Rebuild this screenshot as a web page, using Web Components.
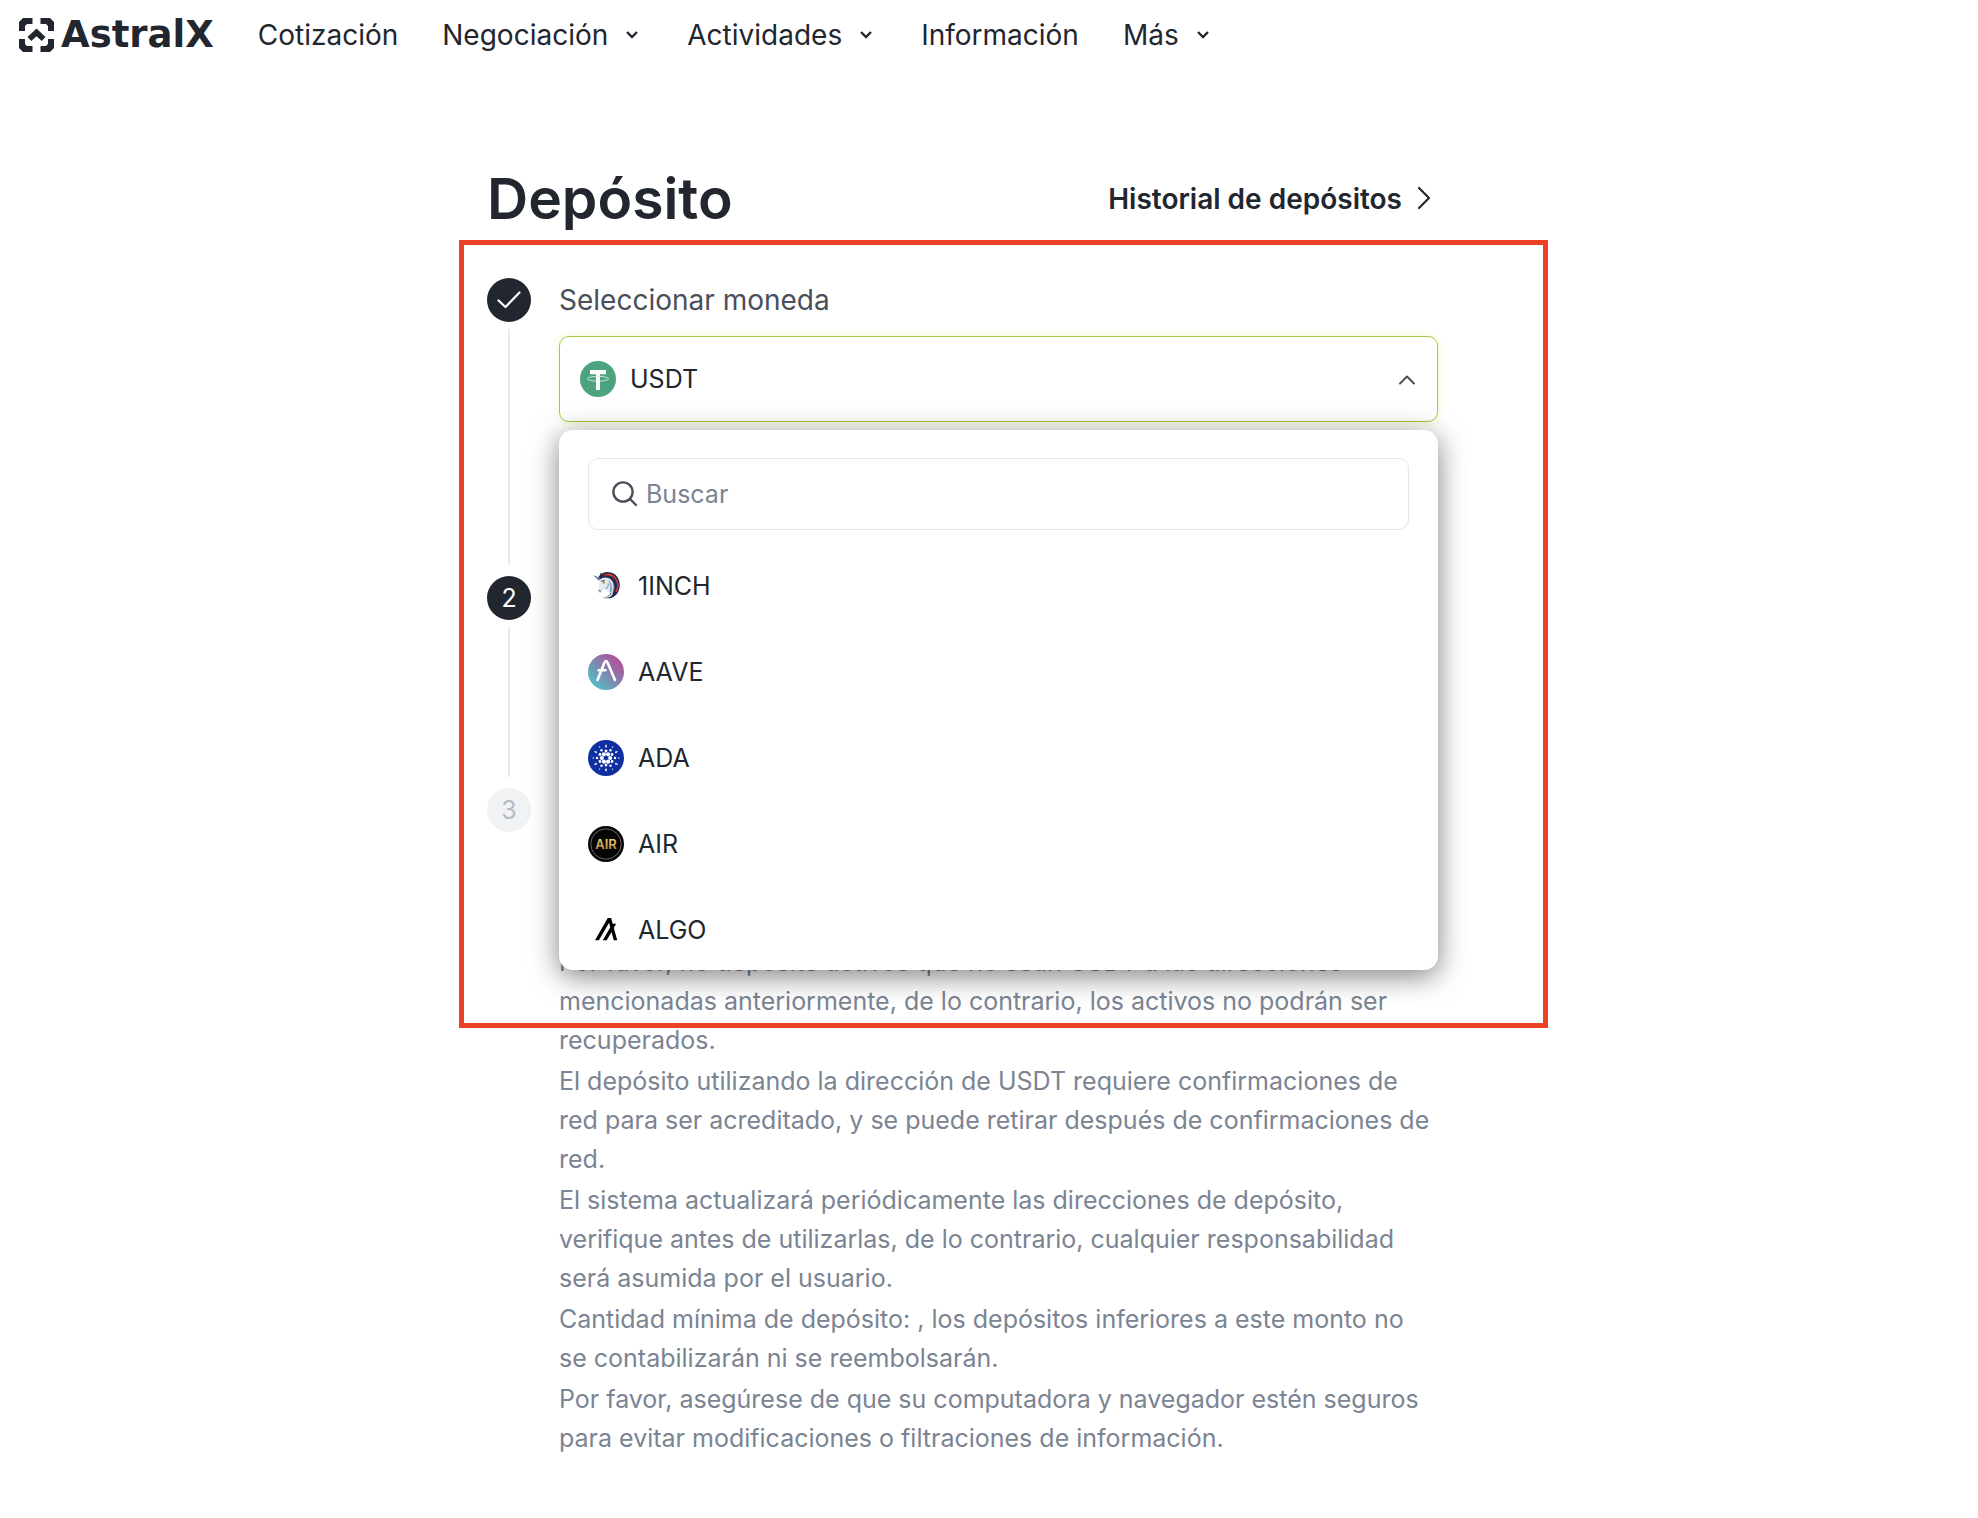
<!DOCTYPE html>
<html lang="es">
<head>
<meta charset="utf-8">
<meta name="viewport" content="width=device-width, initial-scale=1">
<title>Depósito - AstralX</title>
<style>
  body {
    margin: 0;
    background: #fff;
    color: #22262f;
    font-family: Inter, "Liberation Sans", sans-serif;
    font-size: 25px;
    --ink: #22262f;
    --label: #4a4f5a;
    --muted: #7b8492;
    --line: #e9e9ef;
    --accent: #a5cb41;
    --frame: #ea4025;
  }
</style>
</head>
<body>
<ax-header>
  <ax-nav-item>Cotización</ax-nav-item>
  <ax-nav-item menu>Negociación</ax-nav-item>
  <ax-nav-item menu>Actividades</ax-nav-item>
  <ax-nav-item>Información</ax-nav-item>
  <ax-nav-item menu>Más</ax-nav-item>
</ax-header>
<ax-deposit>
  <ax-step state="done">
    <ax-coin-picker value="USDT" coins="1INCH,AAVE,ADA,AIR,ALGO"></ax-coin-picker>
  </ax-step>
  <ax-step number="2"></ax-step>
  <ax-step number="3" state="pending">
    <ax-notes>
      <p>Por favor, no deposite activos que no sean USDT a las direcciones<br>mencionadas anteriormente, de lo contrario, los activos no podrán ser<br>recuperados.</p>
      <p>El depósito utilizando la dirección de USDT requiere confirmaciones de<br>red para ser acreditado, y se puede retirar después de confirmaciones de<br>red.</p>
      <p>El sistema actualizará periódicamente las direcciones de depósito,<br>verifique antes de utilizarlas, de lo contrario, cualquier responsabilidad<br>será asumida por el usuario.</p>
      <p>Cantidad mínima de depósito: , los depósitos inferiores a este monto no<br>se contabilizarán ni se reembolsarán.</p>
      <p>Por favor, asegúrese de que su computadora y navegador estén seguros<br>para evitar modificaciones o filtraciones de información.</p>
    </ax-notes>
  </ax-step>
</ax-deposit>

<script>
class AxHeader extends HTMLElement {
  constructor() {
    super();

    this.attachShadow({ mode: 'open' }).innerHTML = `
      <style>
        :host {
          display: block;
        }
        header {
          display: flex;
          align-items: center;
          height: 70px;
          padding: 0 19px;
          gap: 44px;
        }
        a {
          display: flex;
          align-items: center;
          gap: 7px;
          height: 34px;
          color: var(--ink);
          font-family: "DejaVu Sans", sans-serif;
          font-size: 37px;
          font-weight: 700;
          line-height: 34px;
          text-decoration: none;
        }
        nav {
          display: flex;
          gap: 44px;
        }
      </style>
      <header>
        <a href="#">
          <svg width="35" height="34" viewBox="0 0 35 34" fill="currentColor" aria-hidden="true">
            <path d="M4 0h9.500v6H8L6 8v5H0V4z"/>
            <path d="M31 0h-9.500v6H27l2 2v5h6V4z"/>
            <path d="M4 34h9.500v-6H8l-2-2v-5H0v9z"/>
            <path d="M31 34h-9.500v-6H27l2-2v-5h6v9z"/>
            <path d="M17.500 10.500l9 8.500-3.800 4-5.200-4.800-5.200 4.800-3.800-4z"/>
          </svg>
          AstralX
        </a>
        <nav><slot></slot></nav>
      </header>
    `;
  }
}

class AxNavItem extends HTMLElement {
  constructor() {
    super();

    this.attachShadow({ mode: 'open' }).innerHTML = `
      <style>
        :host {
          display: block;
        }
        a {
          display: flex;
          align-items: center;
          gap: 13px;
          color: var(--ink);
          font-size: 28px;
          line-height: 36px;
          text-decoration: none;
        }
        svg {
          display: none;
        }
        :host([menu]) svg {
          display: block;
        }
      </style>
      <a href="#">
        <slot></slot>
        <svg width="22" height="22" viewBox="0 0 22 22" fill="none" stroke="currentColor" stroke-width="2.400" aria-hidden="true">
          <path d="M6 8l5 5 5-5"/>
        </svg>
      </a>
    `;
  }
}

class AxDeposit extends HTMLElement {
  constructor() {
    super();

    this.attachShadow({ mode: 'open' }).innerHTML = `
      <style>
        :host {
          display: block;
          padding: 93px 53px 48px 0;
        }
        main {
          max-width: 951px;
          margin: 0 auto;
        }
        .top {
          display: flex;
          align-items: center;
          justify-content: space-between;
          margin-bottom: 43px;
        }
        h1 {
          margin: 0;
          font-size: 57px;
          font-weight: 600;
          line-height: 72px;
        }
        a {
          display: flex;
          align-items: center;
          gap: 8px;
          color: var(--ink);
          font-size: 28px;
          font-weight: 600;
          line-height: 36px;
          text-decoration: none;
        }
        .steps {
          position: relative;
        }
        /* highlight drawn over the first steps */
        .frame {
          position: absolute;
          top: -38px;
          left: -28px;
          right: -110px;
          height: 778px;
          border: 5px solid var(--frame);
          pointer-events: none;
        }
      </style>
      <main>
        <div class="top">
          <h1>Depósito</h1>
          <a href="#">
            Historial de depósitos
            <svg width="28" height="28" viewBox="0 0 28 28" fill="none" stroke="currentColor" stroke-width="2.200" stroke-linecap="round" stroke-linejoin="round" aria-hidden="true">
              <path d="M9 3l10 10-10 10"/>
            </svg>
          </a>
        </div>
        <div class="steps">
          <slot></slot>
          <div class="frame"></div>
        </div>
      </main>
    `;
  }
}

class AxStep extends HTMLElement {
  constructor() {
    super();

    const done = this.getAttribute('state') === 'done';
    this.attachShadow({ mode: 'open' }).innerHTML = `
      <style>
        :host {
          display: grid;
          grid-template-columns: 44px minmax(0, 1fr);
          column-gap: 28px;
          min-height: 212px;
        }
        :host([state="done"]) {
          min-height: 298px;
        }
        .rail {
          display: flex;
          flex-direction: column;
          align-items: center;
        }
        .marker {
          display: flex;
          align-items: center;
          justify-content: center;
          width: 44px;
          height: 44px;
          border-radius: 50%;
          background: var(--ink);
          color: #fff;
        }
        .rail::after {
          content: "";
          flex: 1;
          width: 2px;
          margin: 7px 0 11px;
          background: var(--line);
        }
        :host([state="pending"]) .marker {
          background: #f1f2f4;
          color: #b4bbc5;
        }
        :host([state="pending"]) .rail::after {
          display: none;
        }
      </style>
      <div class="rail">
        <div class="marker">${done ? `
          <svg width="28" height="28" viewBox="0 0 28 28" fill="none" stroke="currentColor" stroke-width="2.200" stroke-linecap="round" stroke-linejoin="round" aria-label="Completado">
            <path d="M3.500 14.500l7 6.500L24.500 6.500"/>
          </svg>` : this.getAttribute('number')}</div>
      </div>
      <div><slot></slot></div>
    `;
  }
}

const dots = (count, radius, size, turn) => Array.from({ length: count }, (_, i) => {
  const a = (i / count) * Math.PI * 2 + turn;
  return `<circle cx="${(18 + Math.cos(a) * radius).toFixed(2)}" cy="${(18 + Math.sin(a) * radius).toFixed(2)}" r="${size}"/>`;
}).join('');

const COINS = {
  'USDT': `
    <circle cx="18" cy="18" r="18" fill="#4ba37f"/>
    <path fill="#fff" d="M10 9h16v4.200h-6V29h-4V13.200h-6z"/>
    <ellipse cx="18" cy="17.800" rx="10.600" ry="2.400" fill="none" stroke="#d5ebe1" stroke-width="0.900"/>`,
  '1INCH': `
    <path fill="#1c2c4c" d="M10 10C12 5.500 16 3.300 21 4.200 28.500 5 32.500 11.500 31.700 18.500 31 25 27 29.800 20.500 30.300c-2 .1-4-.3-5.500-.9 3.500-.2 6-1.500 7.500-4z"/>
    <path fill="none" stroke="#e3352c" stroke-width="1.600" d="M18 6.500c7-.8 12 5 11.800 11.500 0 2.500-.8 4.500-1.800 6"/>
    <path fill="none" stroke="#a52a2c" stroke-width="1.500" d="M12.500 8.500C14.500 6.300 17 6.500 19 7.500"/>
    <path fill="#e4eaf2" d="M11.500 12C14 8.800 20 8.500 23.500 12c3 4 3.200 9.500.5 13.500-3-.7-5.500-2-6.500-4.500-1.500.5-2.500 1.500-3.500 3.500-1 1.200-3.500.8-4-.8-.2-1.800.5-3.200 1-5 .6-2.500-.2-4.700.5-6.700z"/>
    <path fill="#92a6c2" d="M20.500 11.500c3.800 3.500 4.500 9 3 13.500-3-2.500-1-5-1.200-7.500-.2-2.300-1.800-3.500-1.800-6z"/>
    <path fill="none" stroke="#53698e" stroke-width="0.800" d="M17.500 21c2.200-1 3-3 2.800-5.500M24.800 13c2 4 2 8 .4 11.500"/>
    <path fill="#f3f6fa" d="M15.500 29.300c5-.3 8.300-2.500 8.700-6.300 2 3.500-2 8-8.700 6.300z"/>
    <path fill="#6c7c98" d="M5 7.300l7.500 2.500-1.500 3z"/>
    <path fill="#1c2c4c" d="M11.500 10l1-5 4 3z"/>
    <circle cx="15.800" cy="14.500" r="1.200" fill="#b9a22f"/>
    <path fill="none" stroke="#1c2c4c" stroke-width="0.900" d="M13 13.300l3.800-.8M10.800 22.500l2 .6"/>`,
  'AAVE': `
    <defs><linearGradient id="g" x1="0.150" y1="0.850" x2="0.850" y2="0.150">
      <stop offset="0" stop-color="#52bcc6"/><stop offset="1" stop-color="#b14f98"/>
    </linearGradient></defs>
    <circle cx="18" cy="18" r="18" fill="url(#g)"/>
    <path fill="none" stroke="#fff" stroke-width="2.600" stroke-linecap="round" stroke-linejoin="round" d="M9.500 26L16.500 8.500Q18 5.500 19.500 8.500L27 26M10.500 16.200h7"/>`,
  'ADA': `
    <circle cx="18" cy="18" r="18" fill="#0f2fa0"/>
    <g fill="#fff">
      ${dots(6, 4.2, 2.1, 0)}
      ${dots(6, 7, 1.4, Math.PI / 6)}
      ${dots(6, 9, 1.2, 0)}
      ${dots(6, 11.5, 0.9, Math.PI / 6)}
      ${dots(12, 12.8, 0.7, 0)}
    </g>`,
  'AIR': `
    <defs><linearGradient id="g" x1="0" y1="0" x2="0" y2="1">
      <stop offset="0" stop-color="#f7dc8c"/><stop offset="1" stop-color="#b9802f"/>
    </linearGradient></defs>
    <circle cx="18" cy="18" r="18" fill="#050505"/>
    <circle cx="18" cy="18" r="15.200" fill="none" stroke="#8c8c8c" stroke-width="0.700"/>
    <text x="18" y="23" text-anchor="middle" font-size="13" font-weight="600" fill="url(#g)">AIR</text>`,
  'ALGO': `
    <path fill="#000" transform="translate(7 6) scale(.59)" d="M37.700 37.800h-5.900L28 23.600l-8.200 14.200h-6.600l12.700-22-2-7.700L6.600 37.800H0L21.600.2h5.800l2.500 9.400h6l-4.100 7.100z"/>`,
};

class AxCoinIcon extends HTMLElement {
  constructor() {
    super();

    this.attachShadow({ mode: 'open' }).innerHTML = `
      <style>
        :host {
          display: block;
          flex: none;
          width: 36px;
          height: 36px;
        }
        svg {
          display: block;
        }
      </style>
      <svg width="36" height="36" viewBox="0 0 36 36" aria-hidden="true"></svg>
    `;
  }

  static get observedAttributes() {
    return ['name'];
  }

  attributeChangedCallback(name, oldValue, newValue) {
    this.shadowRoot.querySelector('svg').innerHTML = COINS[newValue] || '';
  }
}

class AxCoinPicker extends HTMLElement {
  constructor() {
    super();

    const value = this.getAttribute('value');
    const coins = this.getAttribute('coins').split(',');
    this.attachShadow({ mode: 'open' }).innerHTML = `
      <style>
        :host {
          display: block;
          position: relative;
        }
        .label {
          display: block;
          margin-bottom: 14px;
          color: var(--label);
          font-size: 28px;
          line-height: 44px;
        }
        .field {
          display: flex;
          align-items: center;
          gap: 14px;
          box-sizing: border-box;
          height: 86px;
          padding: 0 20px;
          border: 1px solid var(--accent);
          border-radius: 10px;
          box-shadow: 0 0 6px 1px #f0fbcf;
        }
        select {
          flex: 1;
          appearance: none;
          min-width: 0;
          height: 44px;
          padding: 0;
          border: 0;
          outline: 0;
          background: none;
          color: var(--ink);
          font: inherit;
        }
        .menu {
          position: absolute;
          top: calc(100% + 8px);
          left: 0;
          right: 0;
          z-index: 1;
          display: flex;
          flex-direction: column;
          gap: 13px;
          box-sizing: border-box;
          max-height: 540px;
          padding: 28px 29px 0;
          overflow: hidden;
          border-radius: 14px;
          background: #fff;
          box-shadow: 0 6px 28px rgba(0, 0, 0, 0.5);
        }
        .search {
          display: flex;
          flex: none;
          align-items: center;
          gap: 7px;
          box-sizing: border-box;
          height: 72px;
          padding: 0 22px;
          border: 1px solid #e5e6ea;
          border-radius: 10px;
          color: var(--label);
        }
        input {
          flex: 1;
          min-width: 0;
          padding: 0;
          border: 0;
          outline: 0;
          background: none;
          color: var(--ink);
          font: inherit;
        }
        input::placeholder {
          color: var(--muted);
        }
        ul {
          margin: 0;
          padding: 0;
          overflow: auto;
          scrollbar-width: none;
          list-style: none;
        }
        li button {
          display: flex;
          align-items: center;
          gap: 14px;
          width: 100%;
          height: 86px;
          padding: 0;
          border: 0;
          background: none;
          color: inherit;
          font: inherit;
          cursor: pointer;
        }
      </style>
      <label class="label" for="coin">Seleccionar moneda</label>
      <div class="field">
        <ax-coin-icon name="${value}"></ax-coin-icon>
        <select id="coin">
          ${[value, ...coins].map((coin) => `<option>${coin}</option>`).join('')}
        </select>
        <svg width="22" height="22" viewBox="0 0 22 22" fill="none" stroke="#4a4f5a" stroke-width="2" stroke-linecap="round" stroke-linejoin="round" aria-hidden="true">
          <path d="M5 15.500l7-7 7 7"/>
        </svg>
      </div>
      <div class="menu">
        <div class="search">
          <svg width="28" height="28" viewBox="0 0 28 28" fill="none" stroke="currentColor" stroke-width="2.400" stroke-linecap="round" aria-hidden="true">
            <circle cx="12" cy="12" r="9.600"/>
            <path d="M19 19l6 6"/>
          </svg>
          <input type="text" placeholder="Buscar" aria-label="Buscar">
        </div>
        <ul>
          ${coins.map((coin) => `
            <li><button type="button" value="${coin}"><ax-coin-icon name="${coin}"></ax-coin-icon>${coin}</button></li>
          `).join('')}
        </ul>
      </div>
    `;

    this._select = this.shadowRoot.querySelector('select');
    this._icon = this.shadowRoot.querySelector('.field ax-coin-icon');
    this._input = this.shadowRoot.querySelector('input');

    this._select.addEventListener('change', () => {
      this._icon.setAttribute('name', this._select.value);
    });

    for (const button of this.shadowRoot.querySelectorAll('li button')) {
      button.addEventListener('click', () => {
        this._select.value = button.value;
        this._icon.setAttribute('name', button.value);
      });
    }

    this._input.addEventListener('input', () => {
      const query = this._input.value.toUpperCase();
      for (const button of this.shadowRoot.querySelectorAll('li button')) {
        button.parentNode.hidden = !button.value.includes(query);
      }
    });
  }
}

class AxNotes extends HTMLElement {
  constructor() {
    super();

    this.attachShadow({ mode: 'open' }).innerHTML = `
      <style>
        :host {
          display: flex;
          flex-direction: column;
          gap: 2px;
          padding-top: 155px;
          color: var(--muted);
          line-height: 39px;
        }
        ::slotted(p) {
          margin: 0;
        }
      </style>
      <slot></slot>
    `;
  }
}

customElements.define('ax-header', AxHeader);
customElements.define('ax-nav-item', AxNavItem);
customElements.define('ax-deposit', AxDeposit);
customElements.define('ax-step', AxStep);
customElements.define('ax-coin-icon', AxCoinIcon);
customElements.define('ax-coin-picker', AxCoinPicker);
customElements.define('ax-notes', AxNotes);
</script>
</body>
</html>
